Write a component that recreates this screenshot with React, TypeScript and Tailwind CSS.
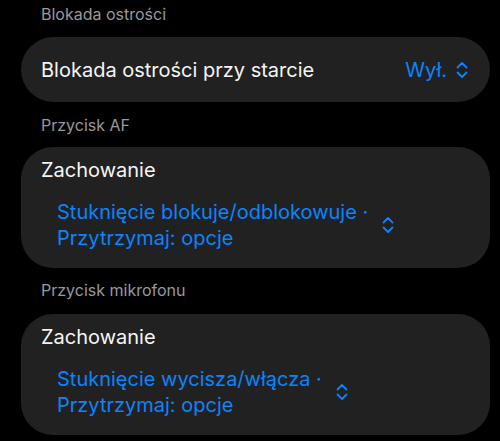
import React from 'react';

function Chevrons() {
  return (
    <svg width="12" height="18" viewBox="0 0 12 18" fill="none" stroke="currentColor" strokeWidth="1.8" strokeLinecap="round" strokeLinejoin="round">
      <path d="M1.5 6.5 L6 2 L10.5 6.5" />
      <path d="M1.5 11.5 L6 16 L10.5 11.5" />
    </svg>
  );
}

function SectionLabel({ text }: { text: string }) {
  return <div className="pl-[20px] text-[16px] leading-[20px] text-[#98989d]">{text}</div>;
}

function BehaviourCard({ first, second }: { first: string; second: string }) {
  return (
    <div className="rounded-[32px] bg-[#212121] pl-[20px] pr-4 pt-[10px] pb-[17px]">
      <div className="text-[20px] leading-[26px] text-[#f5f5f5]">Zachowanie</div>
      <div className="mt-4 flex items-center gap-[14px] pl-4 text-[#0a84ff]">
        <div className="text-[20px] leading-[26px]">
          <div>{first}</div>
          <div>{second}</div>
        </div>
        <Chevrons />
      </div>
    </div>
  );
}

export default function App() {
  return (
    <div className="h-[441px] w-full overflow-hidden bg-black pl-[21px] pr-[10px] pt-[4px]" style={{ fontFamily: 'Inter, "Noto Sans", sans-serif' }}>
      <SectionLabel text="Blokada ostrości" />
      <div className="mt-[13px] flex h-[65px] items-center justify-between rounded-full bg-[#212121] pl-[20px] pr-[22px]">
        <span className="text-[20px] text-[#f5f5f5]">Blokada ostrości przy starcie</span>
        <span className="flex items-center gap-[9px] text-[20px] text-[#0a84ff]">
          Wył.
          <Chevrons />
        </span>
      </div>
      <div className="mt-[13px]">
        <SectionLabel text="Przycisk AF" />
      </div>
      <div className="mt-[12px]">
        <BehaviourCard first="Stuknięcie blokuje/odblokowuje ·" second="Przytrzymaj: opcje" />
      </div>
      <div className="mt-[12px]">
        <SectionLabel text="Przycisk mikrofonu" />
      </div>
      <div className="mt-[14px]">
        <BehaviourCard first="Stuknięcie wycisza/włącza ·" second="Przytrzymaj: opcje" />
      </div>
    </div>
  );
}
